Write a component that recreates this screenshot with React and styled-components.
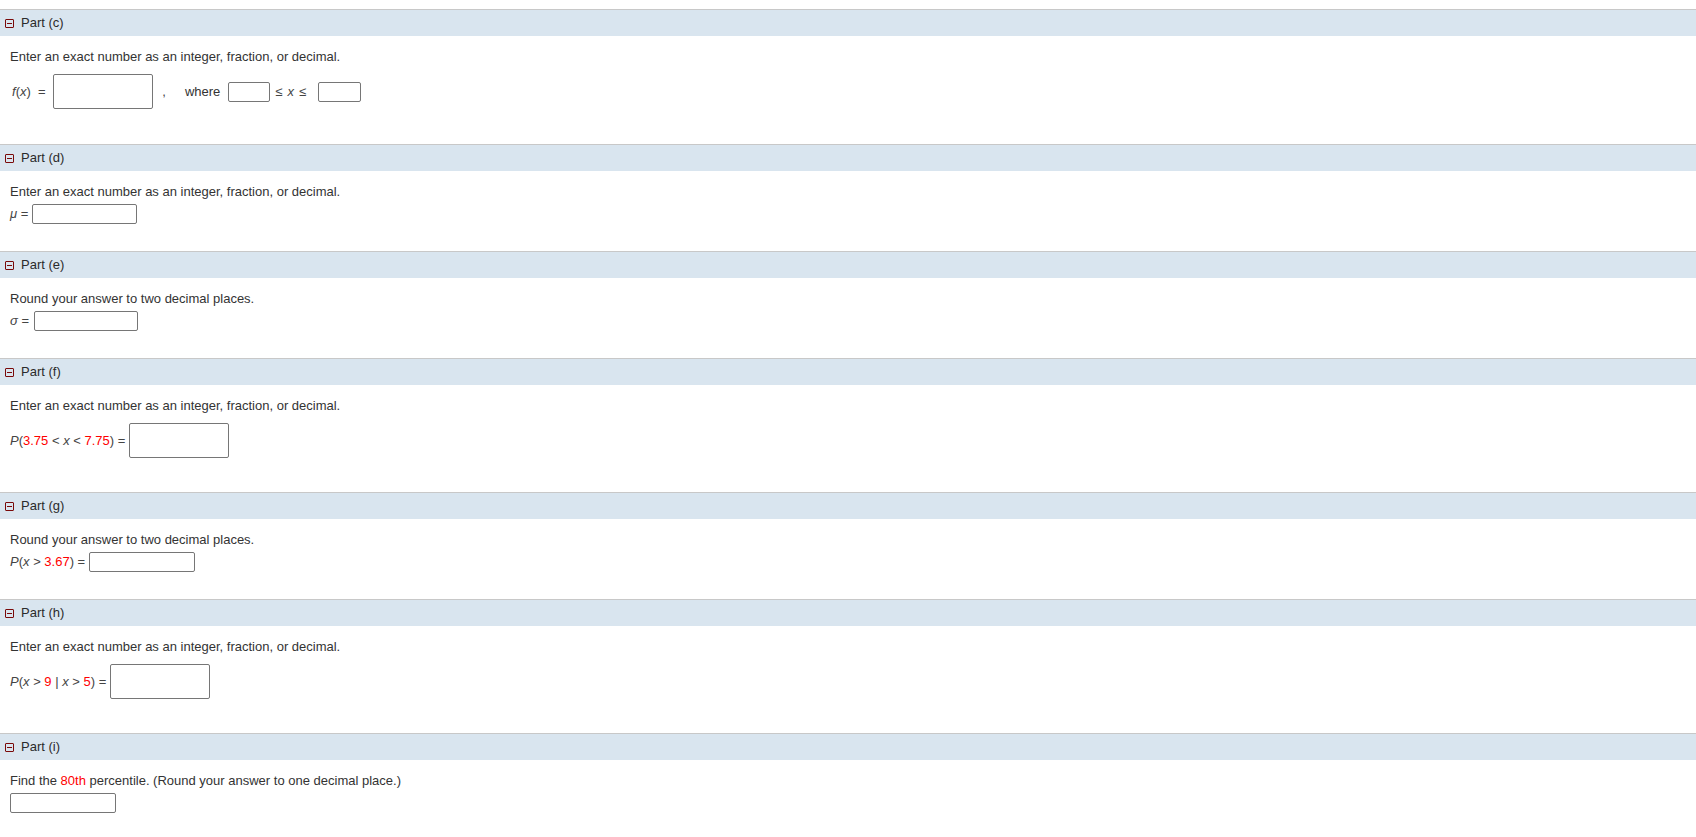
import React from 'react';
import styled, { createGlobalStyle } from 'styled-components';

const Global = createGlobalStyle`
  html, body { margin: 0; padding: 0; background: #fff; }
  body {
    font-family: "Liberation Sans", Arial, Helvetica, sans-serif;
    font-size: 13px;
    color: #333;
  }
`;

const Page = styled.div`
  padding-top: 9px;
`;

const Part = styled.section``;

const Header = styled.div`
  display: flex;
  align-items: center;
  gap: 7px;
  height: 26px;
  padding-left: 5px;
  border-top: 1px solid #c8c8c8;
  background: #d9e5ef;
  color: #2b2b2b;
  font-size: 13px;
  line-height: 26px;
`;

const CollapseIcon = styled.span`
  position: relative;
  box-sizing: border-box;
  width: 9px;
  height: 9px;
  border: 1px solid #7a0a0a;
  border-radius: 1px;
  flex: none;
  &::after {
    content: "";
    position: absolute;
    left: 1px;
    right: 1px;
    top: 3px;
    height: 1px;
    background: #7a0a0a;
  }
`;

const Body = styled.div`
  padding: 12px 10px 27px;
`;

const Instruction = styled.div`
  line-height: 18px;
  color: #333;
`;

const Row = styled.div`
  display: flex;
  align-items: center;
  margin-top: ${p => (p.$tall ? '8px' : '3px')};
  margin-bottom: ${p => (p.$tall ? `${p.$mb ?? 7}px` : '0')};
  white-space: pre;
  color: #444;
  line-height: 18px;
`;

const AnswerBox = styled.input`
  box-sizing: border-box;
  width: ${p => p.$w}px;
  height: ${p => (p.$tall ? 35 : 20)}px;
  margin: 0 0 0 ${p => p.$ml ?? 4}px;
  padding: 0 3px;
  border: 1px solid #767676;
  border-radius: 2px;
  background: #fff;
  font: inherit;
  outline: none;
`;

const V = styled.i`
  font-style: italic;
  margin-left: ${p => p.$ml || 0}px;
  margin-right: ${p => p.$mr || 0}px;
`;

const Red = styled.span`
  color: #ff0000;
`;

const Sep = styled.span`
  margin: 0 ${p => p.$r || 0}px 0 ${p => p.$l || 0}px;
`;

const Word = styled.span`
  color: #333;
  margin-right: ${p => p.$r || 0}px;
`;

const Sections = [
  {
    id: 'c',
    instruction: 'Enter an exact number as an integer, fraction, or decimal.',
    tall: true,
    mb: 8,
    row: (
      <>
        <V $ml={2}>f</V>(<V>x</V>){'  '}={' '}
        <AnswerBox $w={100} $tall aria-label="f(x)" />
        <Sep $l={9} $r={19}>,</Sep>
        <Word>where</Word>
        <AnswerBox $w={42} $ml={8} aria-label="lower" />
        <Sep $l={5}>≤</Sep>
        <V $ml={5}>x</V>
        <Sep $l={5}>≤</Sep>
        <AnswerBox $w={43} $ml={12} aria-label="upper" />
      </>
    ),
  },
  {
    id: 'd',
    instruction: 'Enter an exact number as an integer, fraction, or decimal.',
    row: (
      <>
        <V>μ</V> =
        <AnswerBox $w={105} aria-label="mu" />
      </>
    ),
  },
  {
    id: 'e',
    instruction: 'Round your answer to two decimal places.',
    row: (
      <>
        <V>σ</V> ={' '}
        <AnswerBox $w={104} $ml={1} aria-label="sigma" />
      </>
    ),
  },
  {
    id: 'f',
    instruction: 'Enter an exact number as an integer, fraction, or decimal.',
    tall: true,
    row: (
      <>
        <V>P</V>(<Red>3.75</Red> &lt; <V>x</V> &lt; <Red>7.75</Red>) =
        <AnswerBox $w={100} $tall aria-label="P1" />
      </>
    ),
  },
  {
    id: 'g',
    instruction: 'Round your answer to two decimal places.',
    row: (
      <>
        <V>P</V>(<V>x</V> &gt; <Red>3.67</Red>) =
        <AnswerBox $w={106} aria-label="P2" />
      </>
    ),
  },
  {
    id: 'h',
    instruction: 'Enter an exact number as an integer, fraction, or decimal.',
    tall: true,
    row: (
      <>
        <V>P</V>(<V>x</V> &gt; <Red>9</Red> | <V>x</V> &gt; <Red>5</Red>) =
        <AnswerBox $w={100} $tall aria-label="P3" />
      </>
    ),
  },
  {
    id: 'i',
    instruction: (
      <>
        Find the <Red>80th</Red> percentile. (Round your answer to one decimal place.)
      </>
    ),
    row: <AnswerBox $w={106} $ml={0} aria-label="percentile" />,
  },
];

export default function App() {
  return (
    <>
      <Global />
      <Page>
        {Sections.map(s => (
          <Part key={s.id}>
            <Header>
              <CollapseIcon />
              <span>Part ({s.id})</span>
            </Header>
            <Body>
              <Instruction>{s.instruction}</Instruction>
              <Row $tall={s.tall} $mb={s.mb}>{s.row}</Row>
            </Body>
          </Part>
        ))}
      </Page>
    </>
  );
}
